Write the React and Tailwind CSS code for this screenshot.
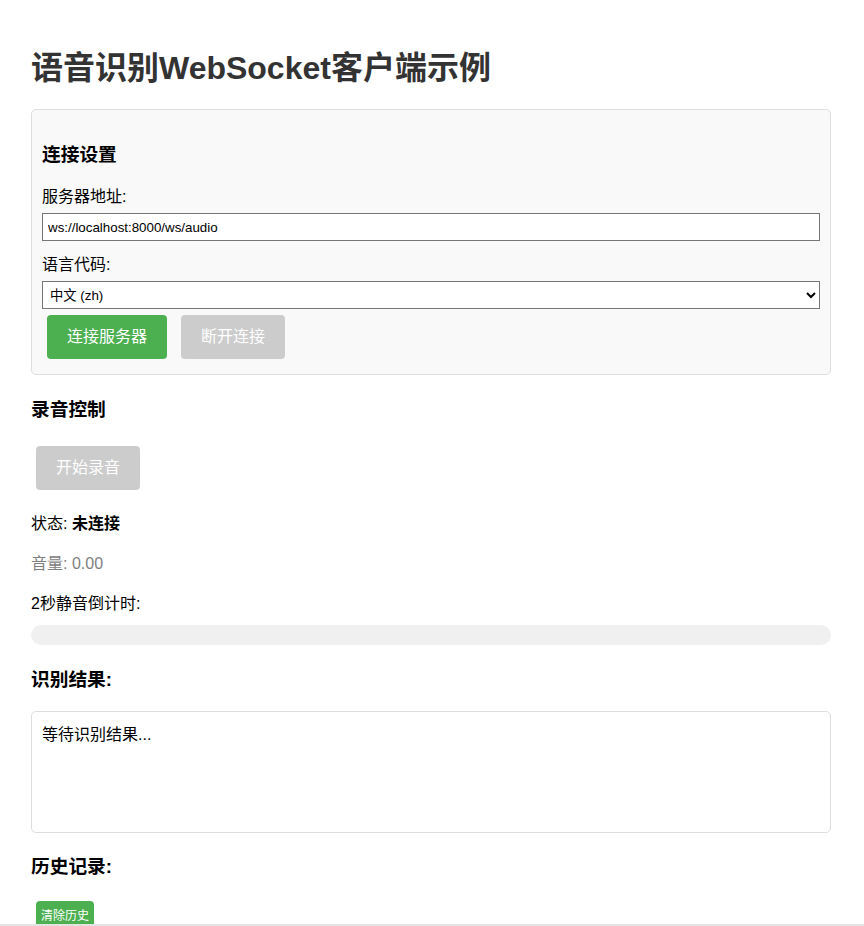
import React from "react";

const font = { fontFamily: '"Liberation Sans", Arial, "Noto Sans CJK SC", sans-serif' };

export default function App() {
  return (
    <div
      className="h-[926px] overflow-hidden border-b-2 border-[#e3e3e3] bg-white text-black"
      style={font}
    >
      <div className="ml-[31px] w-[800px] pt-[50px]">
        <h1 className="text-[32px] font-bold leading-[37px] text-[#333]">
          语音识别WebSocket客户端示例
        </h1>

        <div className="mt-[22px] rounded-[5px] border border-[#ddd] bg-[#f9f9f9] px-[10px] pb-[15px]">
          <h3 className="mt-[34px] text-[18.72px] font-bold leading-[22px]">连接设置</h3>
          <div className="mt-[20px] text-[16px] leading-[22px]">服务器地址:</div>
          <input
            readOnly
            value="ws://localhost:8000/ws/audio"
            className="mt-[5px] block h-[28px] w-full border border-[#767676] bg-white px-[5px] text-[13.33px] text-black outline-none"
            style={font}
          />
          <div className="mt-[13px] text-[16px] leading-[22px]">语言代码:</div>
          <select
            defaultValue="zh"
            className="mt-[5px] block h-[28px] w-full border border-[#767676] bg-white px-[3px] text-[13.33px] text-black"
            style={font}
          >
            <option value="zh">中文 (zh)</option>
            <option value="en">English (en)</option>
          </select>
          <div className="mt-[6px] flex gap-[14px] pl-[5px]">
            <button className="h-[44px] rounded-[4px] bg-[#4CAF50] px-[20px] text-[16px] leading-[24px] text-white">
              连接服务器
            </button>
            <button
              disabled
              className="h-[44px] rounded-[4px] bg-[#cccccc] px-[20px] text-[16px] leading-[24px] text-white"
            >
              断开连接
            </button>
          </div>
        </div>

        <h3 className="mt-[24px] text-[18.72px] font-bold leading-[22px]">录音控制</h3>
        <button
          disabled
          className="ml-[5px] mt-[25px] block h-[44px] rounded-[4px] bg-[#cccccc] px-[20px] text-[16px] leading-[24px] text-white"
        >
          开始录音
        </button>

        <div className="mt-[23px] text-[16px] leading-[22px]">
          状态: <span className="font-bold">未连接</span>
        </div>
        <div className="mt-[18px] text-[16px] leading-[22px] text-[#808080]">音量: 0.00</div>
        <div className="mt-[18px] text-[16px] leading-[22px]">2秒静音倒计时:</div>
        <div className="mt-[10px] h-[20px] w-full rounded-full bg-[#f0f0f0]" />

        <h3 className="mt-[24px] text-[18.72px] font-bold leading-[22px]">识别结果:</h3>
        <div className="mt-[20px] min-h-[122px] rounded-[5px] border border-[#ddd] bg-white px-[10px] pt-[11px] text-[16px] leading-[24px]">
          等待识别结果...
        </div>

        <h3 className="mt-[23px] text-[18.72px] font-bold leading-[22px]">历史记录:</h3>
        <button className="ml-[5px] mt-[23px] block rounded-[4px] bg-[#4CAF50] px-[5px] pb-[6px] pt-[7px] text-[12px] leading-[16px] text-white">
          清除历史
        </button>
      </div>
    </div>
  );
}
